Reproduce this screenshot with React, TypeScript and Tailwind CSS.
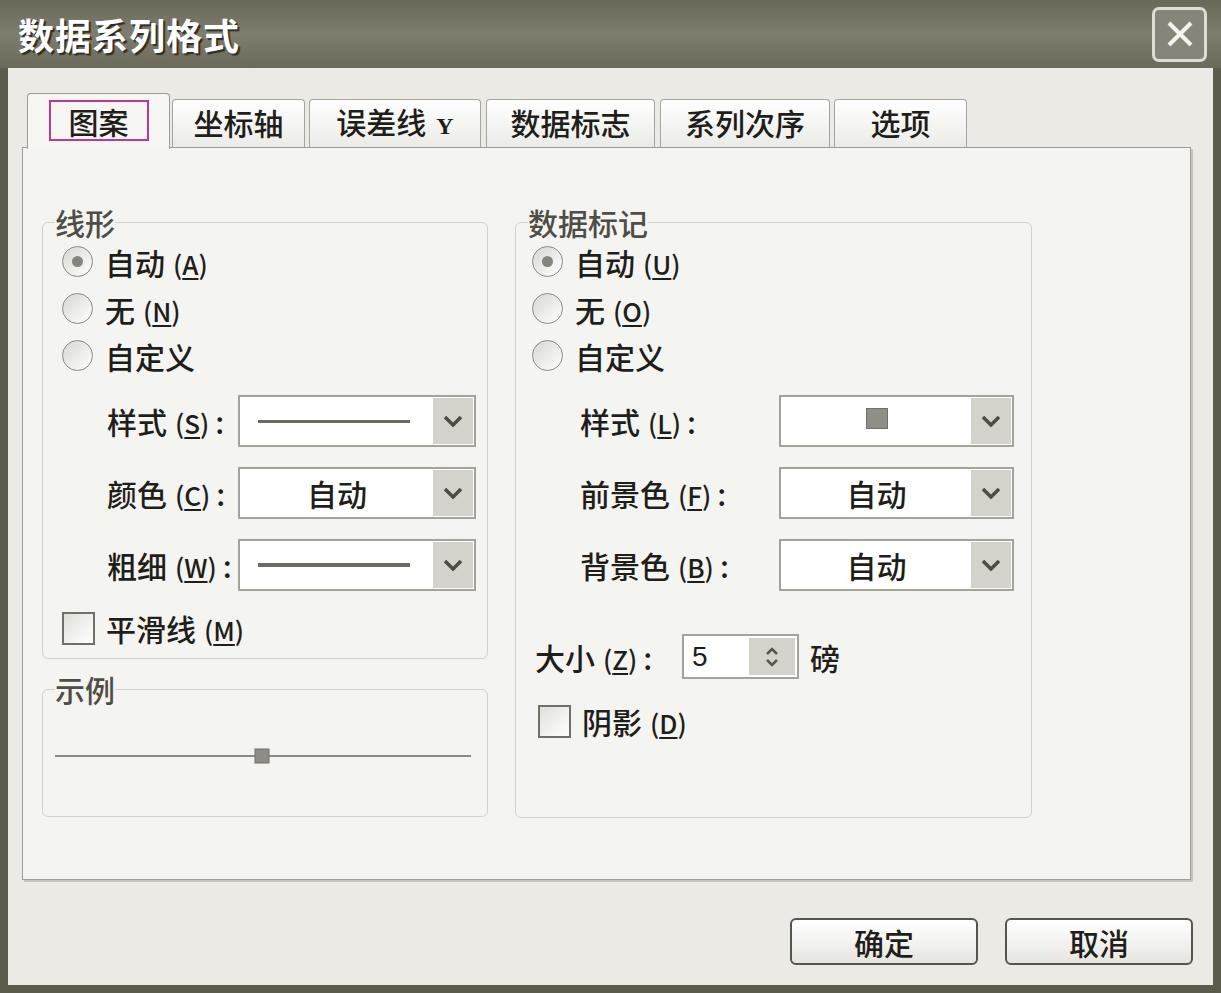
import React from 'react';

const cjk = "font-['Noto_Sans_CJK_SC','Liberation_Sans',sans-serif]";

const tabs = [
  { label: '坐标轴', cls: 'w-[133px] ml-[2px]' },
  { label: '误差线 Y', cls: 'w-[172px] ml-[4px]' },
  { label: '数据标志', cls: 'w-[169px] ml-[5px]' },
  { label: '系列次序', cls: 'w-[170px] ml-[5px]' },
  { label: '选项', cls: 'w-[133px] ml-[4px]' },
];

function Key({ k }: { k: string }) {
  return (
    <span className="ml-[8px] text-[26px]">
      (<span className="underline underline-offset-[3px]">{k}</span>)
    </span>
  );
}

function Radio({ checked, label, k }: { checked?: boolean; label: string; k?: string }) {
  return (
    <div className="flex h-[47px] items-center gap-[12px]">
      <span className="flex h-[31px] w-[31px] items-center justify-center rounded-full border-[1.5px] border-[#8a8a80] bg-linear-to-br from-[#d8d8d0] to-white">
        {checked && <span className="h-[11px] w-[11px] rounded-full bg-[#85857d]" />}
      </span>
      <span>
        {label}
        {k && <Key k={k} />}
      </span>
    </div>
  );
}

function Check({ label, k }: { label: string; k: string }) {
  return (
    <div className="flex h-[34px] items-center gap-[11px]">
      <span className="h-[33px] w-[33px] border-2 border-[#707066] bg-linear-to-br from-[#e0e0da] to-white" />
      <span>
        {label}
        <Key k={k} />
      </span>
    </div>
  );
}

function Chevron() {
  return (
    <svg width="20" height="12" viewBox="0 0 20 12">
      <path d="M2 2 L10 10 L18 2" fill="none" stroke="#4d4d43" strokeWidth="3.5" />
    </svg>
  );
}

function Select({ w, children }: { w: string; children?: React.ReactNode }) {
  return (
    <div className={`flex h-[52px] items-center border-2 border-[#a3a399] bg-white p-[1px] ${w}`}>
      <div className="flex h-full flex-1 items-center justify-center">{children}</div>
      <div className="flex h-full w-[40px] items-center justify-center bg-[#d3d3cb]">
        <Chevron />
      </div>
    </div>
  );
}

function Row({ label, k, labelW, selW, children }: { label: string; k: string; labelW: string; selW: string; children?: React.ReactNode }) {
  return (
    <div className="flex h-[52px] items-center">
      <span className={`${labelW}`}>
        {label}
        <Key k={k} />
        <span className="ml-[6px]">:</span>
      </span>
      <Select w={selW}>{children}</Select>
    </div>
  );
}

function Line({ h }: { h: string }) {
  return <span className={`ml-[14px] mr-[20px] w-[152px] bg-[#6a6a61] ${h}`} />;
}

export default function App() {
  return (
    <div className={`flex h-[993px] w-[1221px] flex-col bg-[#5c5b4c] text-[30px] font-medium leading-none text-[#1e1e1a] ${cjk}`}>
      {/* title bar */}
      <div className="flex h-[68px] items-center justify-between bg-linear-to-b from-[#6a6859] via-[#7f7d6d] to-[#6b6959] pl-[18px] pr-[14px]">
        <span className="text-[36px] font-bold tracking-[1px] text-white [text-shadow:2px_2px_1px_#2e2d24]">数据系列格式</span>
        <div className="flex h-[55px] w-[55px] items-center justify-center rounded-[7px] border-[3px] border-[#deded6] bg-[#87857a]">
          <svg width="32" height="32" viewBox="0 0 32 32">
            <path d="M5 5 L27 27 M27 5 L5 27" stroke="#f4f4ef" strokeWidth="4" />
          </svg>
        </div>
      </div>

      {/* body */}
      <div className="mx-[8px] mb-[8px] flex flex-1 flex-col bg-[#ebeae5] pt-[25px]">
        {/* tabs */}
        <div className="ml-[19px] flex h-[54px] items-end">
          <div className="relative z-10 -mb-[2px] flex h-[56px] w-[143px] items-start justify-center rounded-t-[4px] border border-b-0 border-[#9d9d94] bg-[#f6f6f3] pt-[6px]">
            <span className="flex h-[41px] w-[100px] items-center justify-center border-2 border-[#c2388e]">图案</span>
          </div>
          {tabs.map((t) => (
            <div
              key={t.label}
              className={`flex h-[48px] items-center justify-center rounded-t-[4px] border border-b-0 border-[#a5a59c] bg-linear-to-b from-white to-[#ebebe6] pb-[4px] ${t.cls}`}
            >
              {t.label === '误差线 Y' ? (
                <span>
                  误差线<span className="ml-[10px] font-['Liberation_Serif',serif] text-[24px] font-bold">Y</span>
                </span>
              ) : (
                t.label
              )}
            </div>
          ))}
        </div>

        {/* panel */}
        <div className="ml-[14px] mr-[22px] flex h-[733px] gap-[27px] border border-[#9d9d94] bg-[#f4f4f1] pl-[19px] pt-[62px] shadow-[2px_2px_0_#c6c6be]">
          <div className="flex w-[446px] flex-col">
            <fieldset className="rounded-[6px] border border-[#d2d2c8] px-[12px] pb-[13px] pr-[11px]">
              <legend className="leading-[24px] text-[#4e4e46]">线形</legend>
              <div className="ml-[7px] mt-[4px]">
                <Radio checked label="自动" k="A" />
                <Radio label="无" k="N" />
                <Radio label="自定义" />
              </div>
              <div className="ml-[52px] mt-[16px] flex flex-col gap-[20px]">
                <Row label="样式" k="S" labelW="w-[131px]" selW="w-[238px]">
                  <Line h="h-[3px]" />
                </Row>
                <Row label="颜色" k="C" labelW="w-[131px]" selW="w-[238px]">
                  自动
                </Row>
                <Row label="粗细" k="W" labelW="w-[131px]" selW="w-[238px]">
                  <Line h="h-[4px]" />
                </Row>
              </div>
              <div className="ml-[7px] mt-[20px]">
                <Check label="平滑线" k="M" />
              </div>
            </fieldset>

            <fieldset className="mt-[18px] h-[140px] rounded-[6px] border border-[#d2d2c8] px-[12px]">
              <legend className="leading-[24px] text-[#4e4e46]">示例</legend>
              <div className="pt-[47px]">
                <svg width="416" height="16" viewBox="0 0 416 16">
                  <line x1="0" y1="8" x2="416" y2="8" stroke="#8a8a80" strokeWidth="2" />
                  <rect x="200" y="1" width="14" height="14" fill="#8e8e86" stroke="#6e6e66" strokeWidth="1" />
                </svg>
              </div>
            </fieldset>
          </div>

          <fieldset className="h-[608px] w-[517px] rounded-[6px] border border-[#d2d2c8] px-[12px] pr-[17px]">
            <legend className="leading-[24px] text-[#4e4e46]">数据标记</legend>
            <div className="ml-[4px] mt-[4px]">
              <Radio checked label="自动" k="U" />
              <Radio label="无" k="O" />
              <Radio label="自定义" />
            </div>
            <div className="ml-[52px] mt-[16px] flex flex-col gap-[20px]">
              <Row label="样式" k="L" labelW="w-[199px]" selW="w-[235px]">
                <span className="mb-[6px] h-[21px] w-[22px] border border-[#707068] bg-[#8f8f87]" />
              </Row>
              <Row label="前景色" k="F" labelW="w-[199px]" selW="w-[235px]">
                自动
              </Row>
              <Row label="背景色" k="B" labelW="w-[199px]" selW="w-[235px]">
                自动
              </Row>
            </div>
            <div className="ml-[7px] mt-[43px] flex h-[45px] items-center">
              <span className="w-[147px]">
                大小
                <Key k="Z" />
                <span className="ml-[6px]">:</span>
              </span>
              <div className="flex h-[45px] w-[117px] items-center border-2 border-[#a3a399] bg-white p-[2px]">
                <span className="flex-1 pl-[6px] font-['Liberation_Sans',sans-serif] text-[28px] font-normal">5</span>
                <div className="flex h-full w-[46px] flex-col items-center justify-center gap-[4px] bg-[#d3d3cb]">
                  <svg width="14" height="8" viewBox="0 0 14 8">
                    <path d="M2 7 L7 2 L12 7" fill="none" stroke="#55554b" strokeWidth="2.5" />
                  </svg>
                  <svg width="14" height="8" viewBox="0 0 14 8">
                    <path d="M2 1 L7 6 L12 1" fill="none" stroke="#55554b" strokeWidth="2.5" />
                  </svg>
                </div>
              </div>
              <span className="ml-[11px]">磅</span>
            </div>
            <div className="ml-[10px] mt-[25px]">
              <Check label="阴影" k="D" />
            </div>
          </fieldset>
        </div>

        {/* buttons */}
        <div className="mr-[20px] mt-[38px] flex justify-end gap-[27px]">
          <button className="h-[47px] w-[188px] rounded-[6px] border-2 border-[#55554a] bg-linear-to-b from-white to-[#e6e6e0]">
            确定
          </button>
          <button className="h-[47px] w-[188px] rounded-[6px] border-2 border-[#55554a] bg-linear-to-b from-white to-[#e6e6e0]">
            取消
          </button>
        </div>
      </div>
    </div>
  );
}
